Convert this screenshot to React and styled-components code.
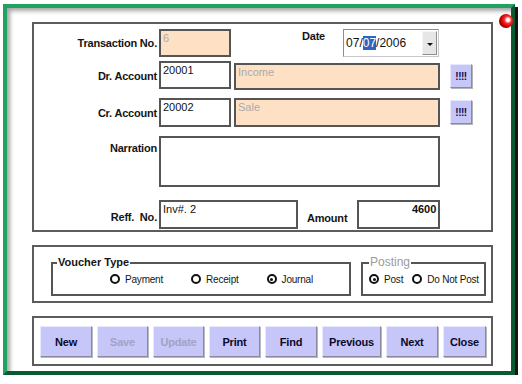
import React from 'react'
import styled, { createGlobalStyle } from 'styled-components'

const GlobalStyle = createGlobalStyle`
  body {
    margin: 0;
    background: #fff;
    font-family: "Liberation Sans", Arial, sans-serif;
  }
`

const Window = styled.div`
  position: relative;
  box-sizing: border-box;
  width: 512px;
  height: 371px;
  margin: 4px 0 0 3px;
  border: 4px solid;
  border-color: #22a262 #0c5a32 #0c5a32 #22a262;
  box-shadow: 3px 3px 0 #151515, inset 4px 4px 4px -1px #a6a6a6;
  background: #fff;
  padding: 14px 18px 5px 25px;
  display: flex;
  flex-direction: column;
  gap: 13px;
`

const Ball = styled.span`
  position: absolute;
  left: 492px;
  top: 6px;
  width: 14px;
  height: 14px;
  border-radius: 50%;
  background: radial-gradient(circle at 64% 42%, #fff 0, #fff 12%, #ff2a2a 30%, #d00000 55%, #2a0000 100%);
`

const Panel = styled.div`
  box-sizing: border-box;
  height: ${p => p.$h}px;
  border: 2px solid #5c5c5c;
  display: flex;
  flex-direction: ${p => p.$dir || 'row'};
  align-items: flex-start;
  padding: ${p => p.$pad};
  gap: ${p => p.$gap || 0}px;
`

const Row = styled.div`
  display: flex;
  align-items: flex-start;
  margin-top: ${p => p.$mt}px;
`

const Label = styled.div`
  box-sizing: border-box;
  width: ${p => (p.$w ? `${p.$w}px` : 'auto')};
  flex-shrink: 0;
  text-align: right;
  font-size: 11px;
  line-height: 14px;
  font-weight: bold;
  letter-spacing: -0.2px;
  color: #151515;
  margin-left: ${p => p.$ml || 0}px;
  margin-right: ${p => p.$mr || 0}px;
  margin-top: ${p => p.$mt || 0}px;
  margin-bottom: ${p => p.$mb || 0}px;
  align-self: ${p => p.$self || 'center'};
`

const Field = styled.div`
  box-sizing: border-box;
  flex-shrink: 0;
  width: ${p => p.$w}px;
  height: ${p => p.$h}px;
  margin-left: ${p => p.$ml || 0}px;
  margin-top: ${p => p.$mt || 0}px;
  border: 2px solid #555;
  background: ${p => (p.$peach ? '#fee0c4' : '#fff')};
  color: ${p => (p.$muted ? '#ababab' : '#111')};
  font-size: 11px;
  line-height: 13px;
  font-weight: ${p => (p.$bold ? 'bold' : 'normal')};
  text-align: ${p => (p.$right ? 'right' : 'left')};
  padding: 1px 2px;
  white-space: nowrap;
  overflow: hidden;
`

const DateBox = styled.div`
  box-sizing: border-box;
  width: 96px;
  height: 28px;
  margin-left: 18px;
  display: flex;
  align-items: center;
  justify-content: space-between;
  border: 1px solid #8c8c8c;
  border-right-color: #c8c8c8;
  border-bottom-color: #c8c8c8;
  background: #fff;
  font-size: 12px;
  color: #111;
  padding-left: 2px;
`

const Selected = styled.span`
  background: #2f63c4;
  color: #fff;
`

const DropButton = styled.div`
  box-sizing: border-box;
  width: 15px;
  height: 24px;
  margin-right: 1px;
  background: #e6e6e6;
  border: 1px solid;
  border-color: #f6f6f6 #8e8e8e #8e8e8e #f6f6f6;
  display: flex;
  align-items: center;
  justify-content: center;

  &::after {
    content: '';
    border-left: 3px solid transparent;
    border-right: 3px solid transparent;
    border-top: 3px solid #111;
    margin-top: 2px;
  }
`

const LookupButton = styled.div`
  box-sizing: border-box;
  width: 22px;
  height: 24px;
  margin-left: 10px;
  margin-top: ${p => p.$mt}px;
  background: #c6c6f8;
  border: 1px solid;
  border-color: #e8e8ff #8a8a9c #8a8a9c #e8e8ff;
  box-shadow: 1px 1px 0 #b4b4b4;
  display: flex;
  align-items: center;
  justify-content: center;
  font-size: 10px;
  font-weight: bold;
  letter-spacing: -0.5px;
  color: #0a0a4a;
`

const GroupBox = styled.fieldset`
  box-sizing: border-box;
  width: ${p => p.$w}px;
  margin: 0 0 0 ${p => p.$ml || 0}px;
  padding: 0 0 8px;
  min-width: 0;
  border: 2px solid #555;
`

const Legend = styled.legend`
  margin-left: ${p => p.$ml}px;
  padding: 0 1px;
  font-size: ${p => (p.$muted ? 12 : 11)}px;
  line-height: 13px;
  font-weight: ${p => (p.$muted ? 'normal' : 'bold')};
  color: ${p => (p.$muted ? '#9c9c9c' : '#151515')};
`

const RadioRow = styled.div`
  display: flex;
  align-items: center;
  margin-top: 3px;
  padding-left: ${p => p.$pl}px;
  gap: ${p => p.$gap}px;
`

const RadioItem = styled.label`
  display: flex;
  align-items: center;
  gap: 5px;
  height: 14px;
  font-size: 10px;
  letter-spacing: -0.2px;
  color: #151515;
`

const RadioDot = styled.span`
  box-sizing: border-box;
  width: 10px;
  height: 10px;
  border: 2px solid #111;
  border-radius: 50%;
  display: flex;
  align-items: center;
  justify-content: center;

  &::after {
    content: '';
    display: ${p => (p.$checked ? 'block' : 'none')};
    width: 3px;
    height: 3px;
    border-radius: 50%;
    background: #111;
  }
`

const ActionButton = styled.div`
  box-sizing: border-box;
  width: ${p => p.$w}px;
  height: 31px;
  background: #c6c6f8;
  border: 1px solid;
  border-color: #e8e8ff #8a8a9c #8a8a9c #e8e8ff;
  box-shadow: 1px 1px 0 #b8b8b8;
  display: flex;
  align-items: center;
  justify-content: center;
  font-size: 11px;
  font-weight: bold;
  letter-spacing: -0.2px;
  color: ${p => (p.$disabled ? '#a2a2c4' : '#0a0a2c')};
`

const Radio = ({ checked, children }) => (
  <RadioItem>
    <RadioDot $checked={checked} />
    {children}
  </RadioItem>
)

const buttons = [
  { text: 'New', w: 52 },
  { text: 'Save', w: 51, disabled: true },
  { text: 'Update', w: 51, disabled: true },
  { text: 'Print', w: 51 },
  { text: 'Find', w: 52 },
  { text: 'Previous', w: 59 },
  { text: 'Next', w: 52 },
  { text: 'Close', w: 43 },
]

const App = () => {
  return (
    <>
      <GlobalStyle />
      <Window>
        <Ball />
        <Panel $h={210} $dir="column" $pad="5px 0 0 0">
          <Row $mt={0}>
            <Label $w={123} $mr={2}>Transaction No.</Label>
            <Field $w={72} $h={28} $peach $muted>6</Field>
            <Label $ml={71} $self="flex-start">Date</Label>
            <DateBox>
              <span>07/<Selected>07</Selected>/2006</span>
              <DropButton />
            </DateBox>
          </Row>
          <Row $mt={4}>
            <Label $w={123} $mr={2}>Dr. Account</Label>
            <Field $w={72} $h={28}>20001</Field>
            <Field $w={206} $h={27} $ml={3} $mt={2} $peach $muted>Income</Field>
            <LookupButton $mt={3}>!!!!</LookupButton>
          </Row>
          <Row $mt={8}>
            <Label $w={123} $mr={2}>Cr. Account</Label>
            <Field $w={72} $h={29}>20002</Field>
            <Field $w={206} $h={29} $ml={3} $peach $muted>Sale</Field>
            <LookupButton $mt={2}>!!!!</LookupButton>
          </Row>
          <Row $mt={9}>
            <Label $w={123} $mr={2} $mt={5} $self="flex-start">Narration</Label>
            <Field $w={281} $h={51} />
          </Row>
          <Row $mt={13}>
            <Label $w={123} $mr={2} $mb={5} $self="flex-end">Reff.&nbsp; No.</Label>
            <Field $w={139} $h={29}>Inv#. 2</Field>
            <Label $ml={9} $mb={4} $self="flex-end">Amount</Label>
            <Field $w={83} $h={29} $ml={10} $bold $right>4600</Field>
          </Row>
        </Panel>

        <Panel $h={58} $pad="9px 0 0 17px">
          <GroupBox $w={300}>
            <Legend $ml={4}>Voucher Type</Legend>
            <RadioRow $pl={57} $gap={28}>
              <Radio>Payment</Radio>
              <Radio>Receipt</Radio>
              <Radio checked>Journal</Radio>
            </RadioRow>
          </GroupBox>
          <GroupBox $w={125} $ml={10}>
            <Legend $ml={6} $muted>Posting</Legend>
            <RadioRow $pl={6} $gap={9}>
              <Radio checked>Post</Radio>
              <Radio>Do Not Post</Radio>
            </RadioRow>
          </GroupBox>
        </Panel>

        <Panel $h={50} $pad="8px 0 0 6px" $gap={5}>
          {buttons.map(b => (
            <ActionButton key={b.text} $w={b.w} $disabled={b.disabled}>
              {b.text}
            </ActionButton>
          ))}
        </Panel>
      </Window>
    </>
  )
}

export default App
